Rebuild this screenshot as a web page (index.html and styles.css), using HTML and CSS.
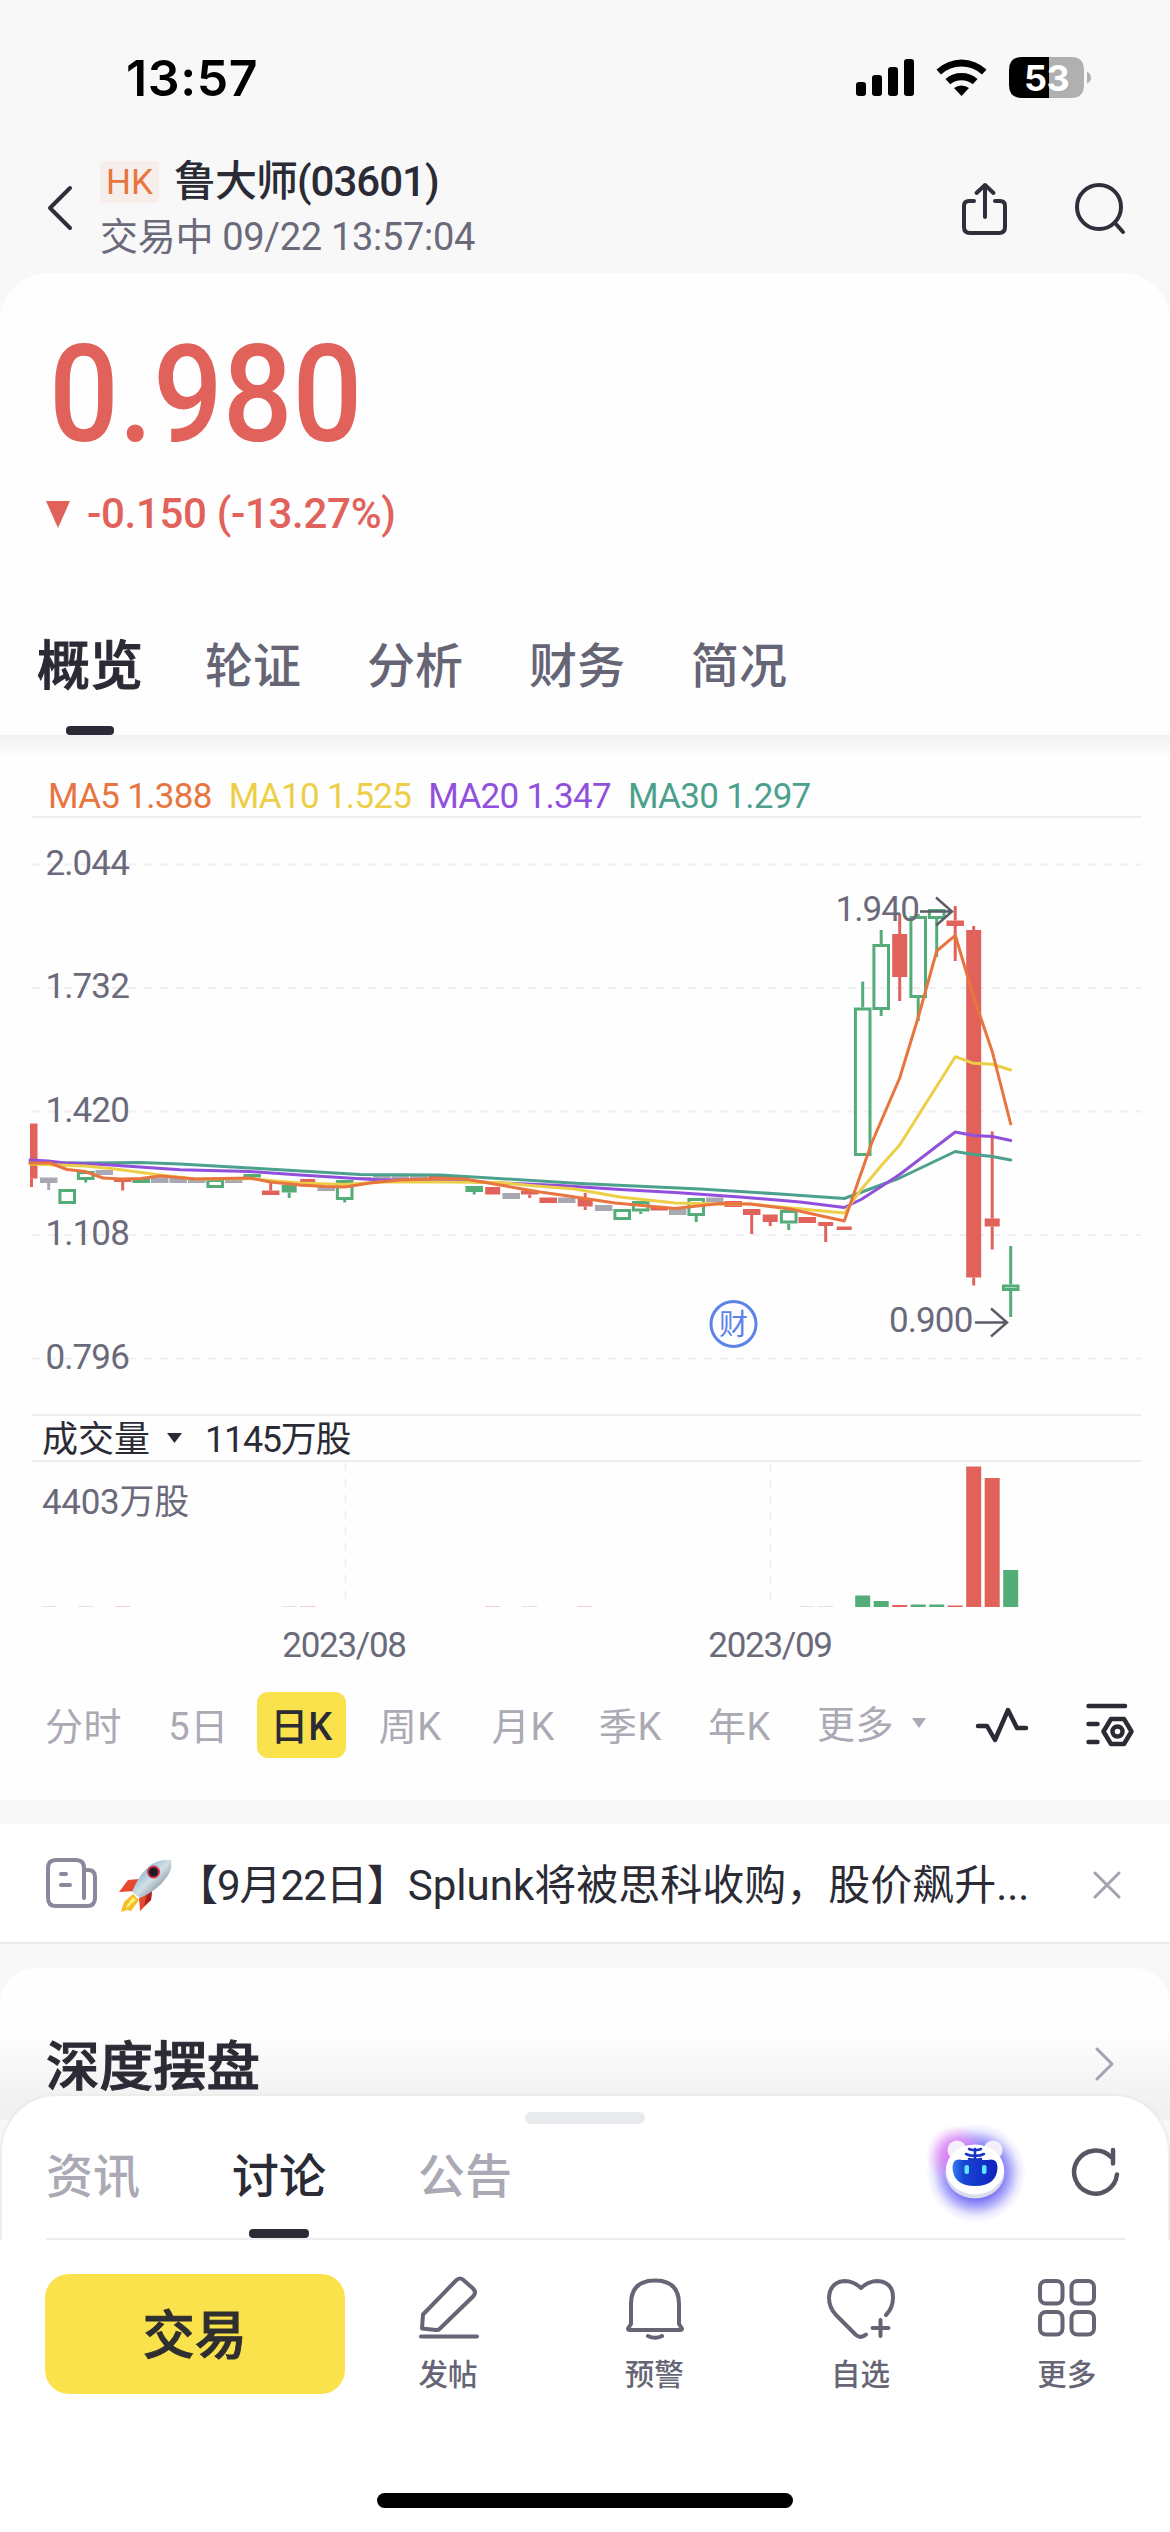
FILE: index.html
```html
<!DOCTYPE html>
<html lang="zh-CN">
<head>
<meta charset="utf-8">
<title>鲁大师(03601)</title>
<link rel="stylesheet" href="styles.css">
</head>
<body>
<div class="app">
  <div class="status">
    <span class="clock">13:57</span>
    <svg class="status-icons" width="240" height="44" viewBox="854 56 240 44">
      <rect x="856" y="82" width="10" height="14" rx="3"/><rect x="872" y="75" width="10" height="21" rx="3"/><rect x="888" y="67" width="10" height="29" rx="3"/><rect x="904" y="59" width="10" height="37" rx="3"/>
      <path d="M936.5 69.500a36.500 36.500 0 0 1 50 0l-4.500 5a30 30 0 0 0-41 0z"/>
      <path d="M945.500 79a24.500 24.500 0 0 1 32 0l-4.800 5.300a17.500 17.500 0 0 0-22.400 0z"/>
      <path d="M954 88a12.500 12.500 0 0 1 15 0l-7.500 8z"/>
      <path d="M1022 57h27v41h-27q-13 0-13-13V70q0-13 13-13z"/>
      <path fill="#b0b0b0" d="M1049 57h22q13 0 13 13v15q0 13-13 13h-22zM1087 71.500q4 2 4 6t-4 6z"/>
      <text x="1046.500" y="91" class="battery-text" text-anchor="middle">53</text>
    </svg>
  </div>

  <header class="header">
    <svg class="back" width="28" height="48" viewBox="0 0 28 48"><path d="M24 4 4 24l20 20"/></svg>
    <div class="title">
      <div class="name-row"><span class="market">HK</span><span class="name">鲁大师(03601)</span></div>
      <div class="state">交易中 09/22 13:57:04</div>
    </div>
    <svg class="share" width="50" height="56" viewBox="0 0 50 56"><path d="M14 20H9q-5 0-5 5v21q0 6 6 6h29q6 0 6-6V25q0-5-5-5h-5M25 36V4M16.500 12 25 4l8.500 8"/></svg>
    <svg class="search" width="54" height="54" viewBox="0 0 54 54"><circle cx="26" cy="25" r="22"/><path d="m42 41 8 9"/></svg>
  </header>

  <section class="quote">
    <div class="price"><span>0.980</span></div>
    <div class="change"><svg width="26" height="29" viewBox="0 0 26 29"><path d="M1 1h24L13 28z"/></svg>-0.150 (-13.27%)</div>
    <nav class="tabs">
      <span class="tab on">概览</span><span class="tab">轮证</span><span class="tab">分析</span><span class="tab">财务</span><span class="tab">简况</span>
    </nav>
  </section>

  <section class="chart">
    <div class="legend"><span class="ma5">MA5 1.388</span><span class="ma10">MA10 1.525</span><span class="ma20">MA20 1.347</span><span class="ma30">MA30 1.297</span></div>
    <svg class="candles" id="candles" width="1170" height="596" viewBox="0 818 1170 596">
      <g class="grid"><path d="M32 864.500H1141M32 988H1141M32 1111.500H1141M32 1235H1141M32 1358.500H1141"/></g>
      <g class="axis"><text x="45.500" y="874.500">2.044</text><text x="45.500" y="998">1.732</text><text x="45.500" y="1121.500">1.420</text><text x="45.500" y="1245">1.108</text><text x="45.500" y="1368.500">0.796</text></g>
      <g id="bars"></g>
      <g class="lines">
        <path class="l30" d="M30 1162.500 85 1163 140 1162.500 180 1164 250 1168 310 1171.500 360 1174.500 440 1175 490 1178 580 1183.500 700 1189 780 1194 844.300 1198.500 899.700 1178 955.300 1151.500 973.700 1154.500 992.300 1156.500 1010.700 1160"/>
        <path class="l20" d="M30 1160 48 1161 65 1163 103 1164.500 140 1167 180 1169.800 250 1171.500 300 1175 380 1180 440 1180 500 1183 560 1185.500 620 1189.500 675 1192.500 740 1197 800 1202 844.300 1207.500 862 1199 899.700 1174.500 955.300 1132 973.700 1135.500 992.300 1136.500 1010.700 1140.500"/>
        <path class="l10" d="M30 1164 85 1166 115 1169 160 1175 196 1179 250 1178.500 270 1180.500 300 1183 345 1184.500 380 1182 445 1182 500 1182.500 530 1185.500 575 1189 620 1197 675 1203 720 1204 750 1204 844.300 1213 860 1191 881 1166 899.700 1145 955.300 1056.700 973.700 1063.300 992.300 1064.300 1010.700 1070"/>
        <path class="l5" d="M30 1163 50 1163 67 1169.500 85 1171.500 103 1178 122 1179 141 1178.500 160 1176 196 1179 250 1178 270 1182 300 1185 325 1186.500 345 1187 370 1183 400 1180 440 1178.500 465 1179 500 1185 540 1192 565 1195.500 615 1203 675 1208.500 720 1203.500 750 1204 790 1209 844.300 1221 871.700 1143 899.700 1078 918.300 1017 936.700 951 955.300 935.300 973.700 997 992.300 1051.700 1010.700 1124"/>
      </g>
      <g class="marks"><text x="835.500" y="921">1.940</text><path d="M920 911.500h31M936 897.500l16 14-16 14"/><text x="889" y="1332">0.900</text><path d="M975 1322.500h31M991 1308.500l16 14-16 14"/></g>
      <g class="report"><circle cx="733.500" cy="1324" r="22.500"/><text x="733.500" y="1334.500" text-anchor="middle">财</text></g>
    </svg>
    <div class="vol-head"><span>成交量</span><svg width="17" height="12" viewBox="0 0 17 12"><path d="M1 1h15l-7.500 10z"/></svg><span class="vol-now">1145万股</span></div>
    <svg class="volume" width="1170" height="231" viewBox="0 1461 1170 231">
      <g class="grid"><path d="M345.500 1463V1607M770.500 1463V1607"/></g>
      <text class="vol-max" x="42" y="1514">4403万股</text>
      <g id="vols"></g>
      <text class="date" x="344" y="1657" text-anchor="middle">2023/08</text><text class="date" x="770" y="1657" text-anchor="middle">2023/09</text>
    </svg>
    <div class="periods">
      <span>分时</span><span>5日</span><span class="picked">日K</span><span class="week">周K</span><span class="month">月K</span><span>季K</span><span>年K</span><span class="more">更多<svg width="16" height="12" viewBox="0 0 16 12"><path d="M1 1h14L8 11z"/></svg></span>
      <svg class="pulse" width="54" height="38" viewBox="0 0 54 38"><path d="M3 20h9l8 14L33 4l9 18h9"/></svg>
      <svg class="tune" width="48" height="44" viewBox="0 0 48 44"><path d="M2.500 3H39M2.500 21h9M2.500 39h9M25 16h13l7.500 12.500L38 41H25l-7.500-12.500z"/><circle cx="31.500" cy="28.500" r="5"/></svg>
    </div>
  </section>

  <section class="news">
    <svg class="paper" width="54" height="52" viewBox="0 0 54 52"><path d="M11 3h20q8 0 8 8v30M39 13h4q7 0 7 7v21q0 8-8 8H11q-8 0-8-8V11q0-8 8-8M16 17h5M16 28h9"/></svg>
    <svg class="rocket" width="54" height="52" viewBox="0 0 54 52">
      <defs><linearGradient id="hull" x1="0" y1="0" x2="1" y2="1"><stop offset="0" stop-color="#4b94c9"/><stop offset=".5" stop-color="#d3dfe6"/><stop offset="1" stop-color="#445769"/></linearGradient></defs>
      <path fill="#e6492d" d="M21 19 10 20 1 32l16-1zM34 31l-1 9-11 11-1-13z"/><path fill="#a92320" d="M34 31l-1 9-7 6 3-12z"/>
      <path fill="#f4be28" d="m15 34-9 8-3 10 6-2 4 1 8-11z"/><path fill="#fff06f" d="m15 37-6 8-1 4 10-9z"/>
      <path fill="url(#hull)" d="M53 0q2 9-5 18Q40 30 22 38l-8-6Q23 10 36 3q8-4 17-3z"/>
      <circle cx="35.500" cy="12" r="6.500" fill="#cf3440"/><circle cx="35.500" cy="12" r="4.500" fill="#1c1a24"/>
    </svg>
    <span class="headline"><span class="day">【9月22日】</span>Splunk将被思科收购，股价飙升...</span>
    <svg class="close" width="28" height="28" viewBox="0 0 28 28"><path d="m2 2 24 24M26 2 2 26"/></svg>
  </section>

  <section class="depth">
    <h2>深度摆盘</h2>
    <svg width="22" height="36" viewBox="0 0 22 36"><path d="m3 3 15 15L3 33"/></svg>
  </section>

  <section class="sheet">
    <div class="handle"></div>
    <div class="feed">
      <span>资讯</span><span class="on">讨论</span><span>公告</span>
      <svg class="bot" width="104" height="104" viewBox="0 0 104 104">
        <defs>
          <radialGradient id="halo"><stop offset=".5" stop-color="#6157f3" stop-opacity=".9"/><stop offset=".7" stop-color="#7772f5" stop-opacity=".55"/><stop offset=".86" stop-color="#8c88f8" stop-opacity=".18"/><stop offset="1" stop-color="#928ff8" stop-opacity="0"/></radialGradient>
          <radialGradient id="pink"><stop offset="0" stop-color="#e278f4"/><stop offset=".5" stop-color="#df86f4" stop-opacity=".75"/><stop offset="1" stop-color="#e9a3f6" stop-opacity="0"/></radialGradient>
          <linearGradient id="visor" x1="0" y1="0" x2="1" y2="0"><stop offset="0" stop-color="#347eef"/><stop offset=".25" stop-color="#1745d4"/><stop offset="1" stop-color="#1022bc"/></linearGradient>
        </defs>
        <circle cx="53" cy="53" r="50" fill="url(#halo)"/><circle cx="33" cy="35" r="30" fill="url(#pink)"/>
        <circle cx="34" cy="30" r="9.500" fill="#f3effb"/><circle cx="70" cy="30" r="9.500" fill="#f3effb"/>
        <ellipse cx="52" cy="52.500" rx="29.500" ry="26" fill="#d9dcec"/><ellipse cx="52" cy="49.500" rx="29" ry="25" fill="#fff"/>
        <path fill="url(#visor)" d="M36 39.500q8 1 10 0l6-1 6 1q2 1 10 0 6 0 6.500 7 0 19.500-22.500 19.500T29.500 46.500q.5-7 6.500-7z"/>
        <path class="stripes" d="M52 29v10M46 29q5 2 6 0 1 2 6 0M43 34q7 3 9 1 2 2 9-1M46 39q5 1 6 0 1 1 6 0"/>
        <rect x="41.500" y="45" width="4.500" height="9" rx="2" fill="#60e5ff"/><rect x="59" y="45" width="4.500" height="9" rx="2" fill="#60e5ff"/>
      </svg>
      <svg class="reload" width="50" height="50" viewBox="0 0 50 50"><path d="M46 27.500A21.500 21.500 0 1 1 40 10M42 3v13.500"/></svg>
    </div>
  </section>

  <footer class="actions">
    <button class="trade">交易</button>
    <div class="action"><svg width="70" height="70" viewBox="413 2273 70 70"><path d="M421 2336.500h56M422 2328.500l1-14 33-34q4-4 8 0l9 8q4 4 0 8l-33 32q-2 2-4 1.500z"/></svg>发帖</div>
    <div class="action"><svg width="70" height="70" viewBox="619 2273 70 70"><path d="M631 2324V2304q0-23.500 24-23.500t24 23.500v20l3 4.500q0 1.500-2 1.500h-50q-2 0-2-1.500zM648 2336q7 3.500 14 0"/></svg>预警</div>
    <div class="action"><svg width="70" height="70" viewBox="826 2273 70 70"><path d="M886 2315q7-7 7-17.500 0-15.500-15.500-16.500-9 0-16.500 7-7.500-7-16.500-7-14.500 1-15.500 16.500 0 10 7 17.500l20 20q5 4 10-.5M880.500 2320v16M872.500 2328h16"/></svg>自选</div>
    <div class="action"><svg width="70" height="70" viewBox="1031.500 2273 70 70"><rect x="1039.500" y="2281" width="22.500" height="22.500" rx="6"/><rect x="1071" y="2281" width="22.500" height="22.500" rx="6"/><rect x="1039.500" y="2312" width="22.500" height="22.500" rx="6"/><rect x="1071" y="2312" width="22.500" height="22.500" rx="6"/></svg>更多</div>
  </footer>
  <div class="home"></div>
</div>
<script src="chart.js"></script>
</body>
</html>
```
FILE: styles.css
```css
* { box-sizing: border-box; }
body { margin: 0; background: #fff; font-family: Roboto, "Noto Sans CJK SC", sans-serif; color: #2b2b36; }
svg { display: block; flex: none; fill: none; stroke-linecap: round; stroke-linejoin: round; }
.app { width: 1170px; height: 2532px; overflow: hidden; background: #f8f8f9; display: flex; flex-direction: column; }
.app > * { flex: none; }
span { white-space: nowrap; }

.status { height: 156px; padding: 0 76px 0 126px; display: flex; align-items: center; justify-content: space-between; }
.clock { font: 600 50px/60px Inter, sans-serif; color: #000; letter-spacing: .6px; }
.status-icons { fill: #000; }
.battery-text { font: 700 36px Inter, sans-serif; fill: #fff; letter-spacing: -.5px; }

.header { height: 117px; display: flex; align-items: center; padding: 0 43px 14px 46px; }
.header svg { stroke: #2f2e3b; stroke-width: 4; }
.title { margin-left: 26px; padding-top: 4px; flex: 1; }
.name-row { display: flex; align-items: center; gap: 15px; height: 54px; }
.market { width: 59px; height: 42px; border-radius: 4px; background: #f6eeea; color: #e8753f; font-size: 35px; line-height: 43px; text-align: center; }
.name { font-size: 42px; font-weight: 500; line-height: 54px; letter-spacing: -1px; }
.state { font-size: 38px; line-height: 56px; color: #6b6a7b; letter-spacing: -.3px; }
.share { margin: 2px 63px 0 0; }
.search { margin-top: 2px; }

.quote { height: 462px; background: #fefefe; border-radius: 48px 48px 0 0; padding-top: 52px; }
.price { height: 140px; padding-left: 49px; font-size: 135px; font-weight: 500; line-height: 140px; color: #e1625b; }
.price span { display: inline-block; transform: scaleX(.91); transform-origin: 0 50%; }
.change { height: 50px; margin-top: 24px; padding-left: 45px; display: flex; align-items: center; gap: 16px; font-size: 42px; font-weight: 500; line-height: 50px; color: #e1625b; letter-spacing: -.3px; }
.change svg { fill: #e1625b; }
.tabs { height: 140px; margin-top: 56px; padding-left: 37px; display: flex; gap: 66px; }
.tab { height: 140px; font-size: 48px; font-weight: 500; line-height: 144px; color: #666576; }
.tab.on { font-size: 53px; -webkit-text-stroke: 1px #2b2b36; color: #2b2b36; position: relative; margin-right: -4px; }
.tab.on::after { content: ""; position: absolute; left: 29px; bottom: 0; width: 48px; height: 9px; border-radius: 4px; background: #2b2b38; }

.chart { height: 1065px; background: linear-gradient(#f1f1f2, #fefefe 22px); }
.legend { height: 83px; margin: 0 29px 0 32px; padding: 27px 0 0 16px; border-bottom: 2px solid #ededf0; display: flex; gap: 17px; font-size: 35px; line-height: 70px; letter-spacing: -.7px; }
.legend span { height: 54px; }
.ma5 { color: #e8753f; } .ma10 { color: #edcf47; } .ma20 { color: #9150dc; } .ma30 { color: #4ca18d; }
.grid { stroke: #f0f0f2; stroke-width: 2; stroke-dasharray: 8 8; stroke-linecap: butt; }
.candles text, .volume text { font-size: 35px; fill: #6b6a7b; }
.candles .axis text, .candles .marks text { letter-spacing: -.9px; }
.volume .vol-max { letter-spacing: -.3px; }
.volume .date { letter-spacing: -1.3px; }
.lines { stroke-width: 3; }
.l5 { stroke: #e8753f; } .l10 { stroke: #edcf47; } .l20 { stroke: #9150dc; } .l30 { stroke: #4ca18d; }
.marks { stroke: #5d5c69; stroke-width: 2.5; stroke-linecap: butt; stroke-linejoin: miter; }
.marks text { stroke: none; }
.report { stroke: #5c83ea; stroke-width: 3; }
.candles .report text { stroke: none; fill: #5c83ea; font-size: 29px; }
.bar { stroke-linecap: butt; stroke-linejoin: miter; stroke-width: 3; }
.red { fill: #e1625b; stroke: #e1625b; }
.green { fill: #54ad78; stroke: #54ad78; }
.gray { fill: #a8a8b3; stroke: #a8a8b3; }
.hollow { fill: none; stroke-width: 3; }
.solid { stroke: none; }
.faint { opacity: .3; }
.vol-head { height: 48px; margin: 0 29px 0 32px; padding-left: 10px; border: 2px solid #ededf0; border-width: 2px 0; display: flex; align-items: center; font-size: 36px; line-height: 48px; }
.vol-head span { height: 44px; }
.vol-head svg { fill: #2b2b36; margin: 0 22px 0 16px; }
.vol-now { letter-spacing: -1.3px; }
.volume { margin-top: -1px; }
.periods { height: 66px; padding-left: 45px; display: flex; align-items: center; font-size: 38px; line-height: 70px; color: #aaa9b4; }
.periods > span { height: 66px; margin-right: 46px; letter-spacing: .6px; }
.periods .picked { width: 89px; margin: 0 33px 0 -18px; border-radius: 11px; background: #f9e24c; color: #2b2b36; font-weight: 500; letter-spacing: 0; text-align: center; }
.periods .week { margin-right: 50px; }
.periods .month { margin-right: 44px; }
.periods .more { display: flex; align-items: center; gap: 17px; margin-right: 48px; }
.more svg { fill: #aaa9b4; margin-top: -4px; }
.pulse, .tune { stroke: #2b2b36; stroke-width: 4.5; }
.tune { margin-left: 57px; }

.news { height: 120px; margin-top: 24px; background: #fff; border-bottom: 2px solid #ebebed; display: flex; align-items: center; padding-left: 45px; }
.paper { stroke: #8a889b; stroke-width: 4; }
.rocket { margin: 6px 0 0 19px; }
.headline { margin-left: 4px; width: 917px; padding-top: 6px; font-size: 42px; line-height: 60px; }
.day { letter-spacing: -1px; }
.close { margin-top: 3px; stroke: #a3a2af; stroke-width: 3; }

.depth { height: 152px; margin-top: 24px; padding: 60px 54px 0 46px; border-radius: 36px 36px 0 0; background: linear-gradient(#fefefe 40%, #f1f1f2 90%); display: flex; justify-content: space-between; }
.depth h2 { margin: 0; font-size: 53.5px; font-weight: 500; line-height: 80px; -webkit-text-stroke: 1px #2b2b36; }
.depth svg { margin-top: 18px; stroke: #a3a2af; stroke-width: 3; }

.sheet { height: 144px; margin-top: -24px; background: #fff; border: 2px solid #eeeef0; border-width: 0 2px; border-radius: 56px 56px 0 0; box-shadow: 0 -2px 3px rgba(0,0,0,.03); }
.handle { width: 120px; height: 12px; margin: 0 auto; border-radius: 6px; background: #e9eaee; transform: translateY(16px); }
.feed { height: 132px; margin: 0 43px 0 44px; border-bottom: 2px solid #ededf0; display: flex; align-items: flex-start; }
.feed span { margin-right: 92px; height: 130px; font-size: 47px; font-weight: 500; line-height: 138px; color: #aaa9b4; }
.feed .on { color: #2b2b36; position: relative; }
.feed .on::after { content: ""; position: absolute; left: 17px; bottom: 0; width: 60px; height: 9px; border-radius: 4px; background: #2b2b38; }
.bot { margin: 12px 0 0 auto; }
.stripes { stroke: #1734c4; stroke-width: 2.5; }
.reload { margin: 39px 4px 0 44px; stroke: #565561; stroke-width: 4.5; }

.actions { height: 192px; padding: 34px 0 0 45px; background: #fff; display: flex; align-items: flex-start; }
.trade { width: 300px; height: 120px; border: 0; padding: 5px 0 0; border-radius: 24px; background: #f9e24c; color: #2f2e30; font: 500 52px/115px Roboto, "Noto Sans CJK SC", sans-serif; -webkit-text-stroke: 1px #2f2e30; }
.action { width: 206.5px; display: flex; flex-direction: column; align-items: center; font-size: 29.5px; font-weight: 500; line-height: 40px; color: #666576; }
.action svg { stroke: #666576; stroke-width: 4; margin: -1px 0 12px; }
.home { flex: 1 0 0 !important; background: #fff; display: flex; justify-content: center; padding-top: 61px; }
.home::after { content: ""; width: 416px; height: 15px; border-radius: 8px; background: #000; }
```
FILE: chart.js
```js
// Each candle: [kind, bodyTop, bodyBottom, wickTop, wickBottom]
// r = falling, g = rising (outlined), s = rising (filled), n = unchanged
const candles = [
  ["r",1123.5,1178.5,0,1187],["n",1177.5,1183,0,1190],["g",1189,1204],["g",1171,1180,0,1182.5],["n",1170,1175],
  ["r",1179,1182,0,1190.5],["s",1179,1183],["n",1178,1183],["n",1178,1183],["n",1179,1183],
  ["g",1179,1188],["n",1179,1183],["s",1174,1177.5],["r",1190.5,1195,1182,0],["s",1185,1192.5,0,1198],
  ["r",1179,1186.5],["n",1186,1191],["g",1180,1200,0,1202.5],["n",1177,1180],["n",1176,1179],
  ["n",1176,1179],["n",1176,1179],["r",1176,1179],["r",1176,1179],["g",1186,1192,0,1194.5],
  ["r",1187,1194.5],["n",1193,1199],["r",1190.5,1194.5,0,1198],["r",1197.5,1203],["n",1197.5,1203],
  ["r",1199,1206.5,1193,1210],["n",1205,1211],["g",1209,1220],["g",1201,1211.5,0,1214],["r",1206.5,1210.5],
  ["n",1209,1215],["g",1198,1216,0,1222],["n",1197.5,1202.5],["r",1201,1207],["r",1209,1215,0,1234],
  ["r",1214.5,1222,0,1226],["g",1210,1223.5,0,1230],["r",1217,1223],["r",1222,1226,0,1242],["r",1226.5,1230],
  ["g",1007.5,1156,981.5,0],["g",944,1010,930,1016],["r",934,977,914,1001],["g",916,998,914,1021],["g",909,919,0,957],
  ["r",920.5,926,906,961],["r",930,1277.5,926,1285.5],["r",1218.5,1226.5,1131.5,1249.5],["g",1284.5,1291,1246,1317]
];
const tone = { r: "red", g: "green", s: "green", n: "gray" };
const x = i => 30.2 + 18.5 * i;
let out = "";
candles.forEach(([kind, top, bottom, high, low], i) => {
  const c = x(i);
  const cls = "bar " + tone[kind];
  if (high) out += `<path class="${cls}" d="M${c} ${high}V${top}"/>`;
  if (low) out += `<path class="${cls}" d="M${i ? c : 31.5} ${bottom}V${low}"/>`;
  if (kind === "g") {
    out += `<rect class="${cls} hollow" x="${c - 7.3}" y="${top + 1.5}" width="14.6" height="${bottom - top - 3}"/>`;
  } else {
    const w = bottom - top > 7 || kind === "r" && i > 42 && i !== 50 ? 15 : 17.5;
    const left = i ? c - w / 2 : 30;
    out += `<rect class="${cls} solid" x="${left}" y="${top}" width="${i ? w : 7.5}" height="${bottom - top}"/>`;
  }
});
document.getElementById("bars").innerHTML = out;

const volumes = { 45: ["s",1595.5], 46: ["s",1601], 47: ["r",1605], 48: ["s",1604.5], 49: ["s",1604.5], 50: ["r",1605.5], 51: ["r",1466.5], 52: ["r",1478], 53: ["s",1570] };
const traces = [1, 3, 5, 14, 15, 25, 27, 30, 42, 43];
let vol = "";
for (const i in volumes) {
  const [kind, top] = volumes[i];
  vol += `<rect class="${tone[kind]} solid" x="${x(i) - 7.5}" y="${top}" width="15" height="${1607 - top}"/>`;
}
for (const i of traces) vol += `<rect class="${i % 5 ? "gray" : "red"} solid faint" x="${x(i) - 7.5}" y="1606" width="15" height="1"/>`;
document.getElementById("vols").innerHTML = vol;
```
